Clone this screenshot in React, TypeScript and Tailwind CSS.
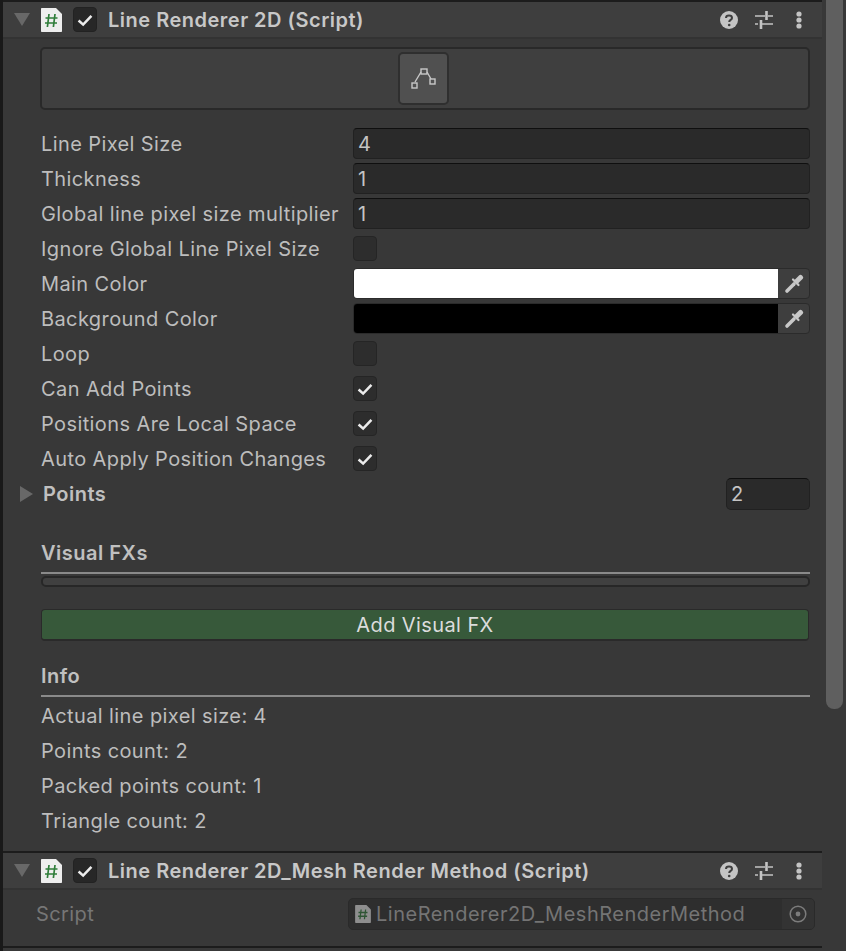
import type { ReactNode } from 'react'

function ScriptIcon({ className = 'w-[21px] h-[24px]' }: { className?: string }) {
  return (
    <svg viewBox="0 0 21 24" className={className}>
      <path d="M1 0H15L21 6V23C21 23.6 20.6 24 20 24H1C.4 24 0 23.6 0 23V1C0 .4 .4 0 1 0Z" fill="#eeeeee" />
      <path d="M8 6 6.4 19M14 6 12.4 19M4.5 10H16.5M4 15H16" stroke="#2f7d3a" strokeWidth="1.7" fill="none" />
    </svg>
  )
}

function CheckMark() {
  return (
    <svg viewBox="0 0 24 24" className="w-[24px] h-[24px]">
      <path d="M5 12.5 10 17 19 7.5" stroke="#ececec" strokeWidth="2.8" fill="none" />
    </svg>
  )
}

function Checkbox({ checked = false }: { checked?: boolean }) {
  return (
    <div className="w-[24px] h-[25px] rounded-[4px] bg-[#2d2d2d] border border-[#252525] flex items-center justify-center">
      {checked && <CheckMark />}
    </div>
  )
}

function ComponentHeader({ title }: { title: string }) {
  return (
    <div className="h-[37px] bg-[#3e3e3e] border-b-2 border-[#333333] flex items-center pl-[11px] pr-[20px]">
      <svg viewBox="0 0 16 13" className="w-[16px] h-[13px] shrink-0">
        <path d="M0 0H16L8 13Z" fill="#686868" />
      </svg>
      <div className="ml-[11px] shrink-0 flex">
        <ScriptIcon />
      </div>
      <div className="ml-[11px] w-[24px] h-[25px] rounded-[4px] bg-[#272727] border border-[#222222] flex items-center justify-center shrink-0">
        <CheckMark />
      </div>
      <span className="ml-[11px] text-[20px] font-semibold tracking-[0.5px] text-[#c8c8c8] whitespace-nowrap">{title}</span>
      <div className="ml-auto flex items-center">
        <svg viewBox="0 0 18 18" className="w-[18px] h-[18px]">
          <circle cx="9" cy="9" r="9" fill="#c4c4c4" />
          <path d="M6 7C6 3.8 12 3.8 12 7C12 9 9.2 8.8 9.2 11" stroke="#3e3e3e" strokeWidth="2" fill="none" />
          <circle cx="9.2" cy="14" r="1.3" fill="#3e3e3e" />
        </svg>
        <svg viewBox="0 0 18 18" className="ml-[17px] w-[18px] h-[18px]">
          <path d="M0 5H10M13 5H18M0 13H3M6 13H18" stroke="#c4c4c4" strokeWidth="1.4" fill="none" />
          <path d="M11.5 0V9M6 9V18" stroke="#c4c4c4" strokeWidth="2.6" fill="none" />
        </svg>
        <svg viewBox="0 0 6 18" className="ml-[23px] w-[6px] h-[18px]">
          <circle cx="3" cy="3" r="2.6" fill="#c4c4c4" />
          <circle cx="3" cy="9" r="2.6" fill="#c4c4c4" />
          <circle cx="3" cy="15" r="2.6" fill="#c4c4c4" />
        </svg>
      </div>
    </div>
  )
}

function Row({ label, children }: { label: string; children?: ReactNode }) {
  return (
    <div className="h-[31px] mb-[4px] flex items-center">
      <span className="w-[312px] shrink-0 text-[20px] text-[#bdbdbd] whitespace-nowrap">{label}</span>
      <div className="flex-1 h-full flex items-center">{children}</div>
    </div>
  )
}

function TextField({ value }: { value: string }) {
  return (
    <div className="w-full h-full rounded-[4px] bg-[#2a2a2a] border border-[#212121] border-t-[#0f0f0f] pl-[4px] flex items-center text-[20px] text-[#c4c4c4]">
      {value}
    </div>
  )
}

function ColorField({ color }: { color: string }) {
  return (
    <div className="w-full h-full rounded-[4px] bg-[#3e3e3e] border border-[#2b2b2b] flex overflow-hidden">
      <div className={`flex-1 ${color}`} />
      <div className="w-[31px] flex items-center justify-center">
        <svg viewBox="0 0 20 20" className="w-[20px] h-[20px]">
          <path d="M3 17 10 10" stroke="#c8c8c8" strokeWidth="3.6" strokeLinecap="round" fill="none" />
          <path d="M9 5.5 14.5 11" stroke="#c8c8c8" strokeWidth="2.2" strokeLinecap="round" fill="none" />
          <path d="M13 7 16.5 3.5" stroke="#c8c8c8" strokeWidth="5" strokeLinecap="round" fill="none" />
        </svg>
      </div>
    </div>
  )
}

function Section({ title }: { title: string }) {
  return <div className="text-[20px] font-semibold tracking-[0.5px] text-[#c0c0c0] leading-[24px]">{title}</div>
}

function InfoLine({ text }: { text: string }) {
  return <div className="h-[35px] flex items-center text-[20px] text-[#bdbdbd] whitespace-nowrap">{text}</div>
}

export default function App() {
  return (
    <div className="w-[846px] h-[951px] overflow-hidden flex bg-[#383838] font-['Inter',sans-serif] tracking-[0.4px]">
      <div className="w-[3px] shrink-0 bg-[#191919]" />
      <div className="w-[819px] shrink-0">
        <div className="h-[2px] bg-[#1c1c1c]" />
        <ComponentHeader title="Line Renderer 2D (Script)" />

        <div className="pl-[38px] pr-[12px] pt-[8px]">
          <div className="-ml-[1px] h-[63px] rounded-[5px] bg-[#3f3f3f] border-2 border-[#292929] flex items-center justify-center">
            <div className="mr-[3px] w-[51px] h-[53px] rounded-[5px] bg-[#505050] border-2 border-[#2f2f2f] flex items-center justify-center">
              <svg viewBox="0 0 26 22" className="w-[26px] h-[22px]">
                <path d="M4 14 10 4M16 4 20 11" stroke="#c8c8c8" strokeWidth="1.4" fill="none" />
                <rect x="10" y="1" width="6" height="5" fill="none" stroke="#c8c8c8" strokeWidth="1.4" />
                <rect x="1" y="15" width="5" height="5" fill="none" stroke="#c8c8c8" strokeWidth="1.4" />
                <rect x="19" y="11" width="5" height="5" fill="none" stroke="#c8c8c8" strokeWidth="1.4" />
              </svg>
            </div>
          </div>

          <div className="mt-[18px]">
            <Row label="Line Pixel Size"><TextField value="4" /></Row>
            <Row label="Thickness"><TextField value="1" /></Row>
            <Row label="Global line pixel size multiplier"><TextField value="1" /></Row>
            <Row label="Ignore Global Line Pixel Size"><Checkbox /></Row>
            <Row label="Main Color"><ColorField color="bg-white" /></Row>
            <Row label="Background Color"><ColorField color="bg-black" /></Row>
            <Row label="Loop"><Checkbox /></Row>
            <Row label="Can Add Points"><Checkbox checked /></Row>
            <Row label="Positions Are Local Space"><Checkbox checked /></Row>
            <Row label="Auto Apply Position Changes"><Checkbox checked /></Row>
          </div>

          <div className="h-[32px] -ml-[21px] flex items-center">
            <svg viewBox="0 0 13 16" className="w-[13px] h-[16px] shrink-0">
              <path d="M0 0 13 8 0 16Z" fill="#686868" />
            </svg>
            <span className="ml-[10px] text-[20px] font-semibold tracking-[0.5px] text-[#c0c0c0]">Points</span>
            <div className="ml-auto w-[84px] h-full rounded-[5px] bg-[#2a2a2a] border border-[#212121] border-t-[#0f0f0f] pl-[4px] flex items-center text-[20px] text-[#c4c4c4]">
              2
            </div>
          </div>

          <div className="mt-[31px]">
            <Section title="Visual FXs" />
            <div className="mt-[7px] h-[2px] bg-[#8a8a8a]" />
            <div className="mt-[2px] h-[11px] rounded-[5px] bg-[#404040] border-2 border-[#272727]" />
          </div>

          <div className="mt-[22px] mr-[1px] h-[32px] rounded-[4px] bg-[#37593a] border border-b-2 border-[#2a2a2a] flex items-center justify-center text-[20px] text-[#dcdcdc]">
            Add Visual FX
          </div>

          <div className="mt-[23px]">
            <Section title="Info" />
            <div className="mt-[7px] h-[2px] bg-[#8a8a8a]" />
            <div className="mt-[1px]">
              <InfoLine text="Actual line pixel size: 4" />
              <InfoLine text="Points count: 2" />
              <InfoLine text="Packed points count: 1" />
              <InfoLine text="Triangle count: 2" />
            </div>
          </div>
        </div>

        <div className="mt-[13px] h-[2px] bg-[#1c1c1c]" />
        <ComponentHeader title="Line Renderer 2D_Mesh Render Method (Script)" />

        <div className="h-[56px] pl-[33px] pr-[7px] pt-[8px] flex items-start">
          <span className="w-[312px] shrink-0 h-[32px] flex items-center text-[20px] text-[#767676]">Script</span>
          <div className="flex-1 h-[32px] rounded-[5px] bg-[#2e2e2e] border border-[#2a2a2a] flex items-center overflow-hidden">
            <div className="ml-[6px] flex opacity-50">
              <ScriptIcon className="w-[16px] h-[18px]" />
            </div>
            <span className="ml-[5px] text-[20px] tracking-[0.5px] text-[#747474] whitespace-nowrap">LineRenderer2D_MeshRenderMethod</span>
            <div className="ml-auto w-[32px] h-full bg-[#333333] flex items-center justify-center">
              <svg viewBox="0 0 18 18" className="w-[18px] h-[18px]">
                <circle cx="9" cy="9" r="7.8" fill="none" stroke="#7c7c7c" strokeWidth="1.5" />
                <circle cx="9" cy="9" r="2.4" fill="#7c7c7c" />
              </svg>
            </div>
          </div>
        </div>
        <div className="h-[2px] bg-[#1c1c1c]" />
      </div>

      <div className="w-[4px] shrink-0 bg-[#383838]" />
      <div className="w-[17px] shrink-0 h-[709px] rounded-b-[8px] bg-[#5f5f5f]" />
    </div>
  )
}
